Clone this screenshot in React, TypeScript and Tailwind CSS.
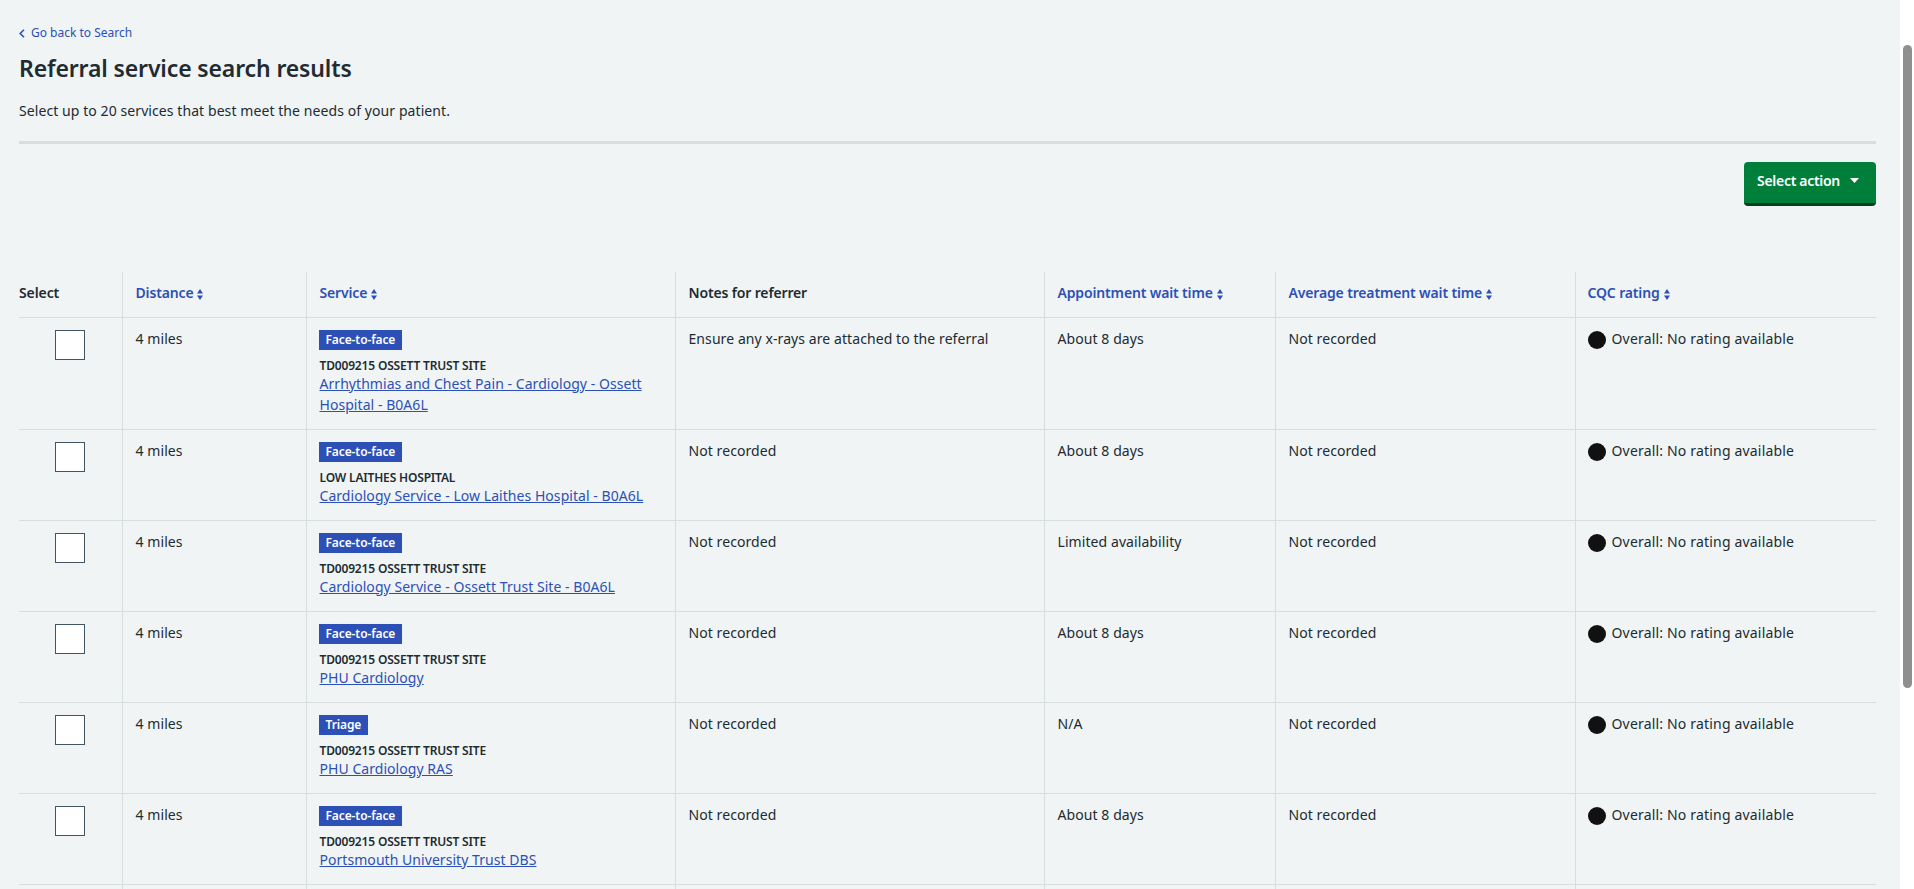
const rows = [
  {
    tag: 'Face-to-face',
    site: 'TD009215 OSSETT TRUST SITE',
    service: 'Arrhythmias and Chest Pain - Cardiology - Ossett Hospital - B0A6L',
    notes: 'Ensure any x-rays are attached to the referral',
    wait: 'About 8 days',
  },
  {
    tag: 'Face-to-face',
    site: 'LOW LAITHES HOSPITAL',
    service: 'Cardiology Service - Low Laithes Hospital - B0A6L',
    notes: 'Not recorded',
    wait: 'About 8 days',
  },
  {
    tag: 'Face-to-face',
    site: 'TD009215 OSSETT TRUST SITE',
    service: 'Cardiology Service - Ossett Trust Site - B0A6L',
    notes: 'Not recorded',
    wait: 'Limited availability',
  },
  {
    tag: 'Face-to-face',
    site: 'TD009215 OSSETT TRUST SITE',
    service: 'PHU Cardiology',
    notes: 'Not recorded',
    wait: 'About 8 days',
  },
  {
    tag: 'Triage',
    site: 'TD009215 OSSETT TRUST SITE',
    service: 'PHU Cardiology RAS',
    notes: 'Not recorded',
    wait: 'N/A',
  },
  {
    tag: 'Face-to-face',
    site: 'TD009215 OSSETT TRUST SITE',
    service: 'Portsmouth University Trust DBS',
    notes: 'Not recorded',
    wait: 'About 8 days',
  },
];

function SortIcon() {
  return (
    <svg className="inline-block ml-[4px] align-[-2px]" width="6" height="11" viewBox="0 0 6 11" fill="currentColor">
      <path d="M3 0 L6 4.5 H0 Z" />
      <path d="M3 11 L0 6.5 H6 Z" />
    </svg>
  );
}

function SortHeader({ label, last }: { label: string; last?: boolean }) {
  return (
    <th className={`pr-[11px] pb-[3px] h-[45px] text-left font-semibold tracking-[-0.15px] text-[#2c50b5] whitespace-nowrap border-b border-[#d8dde0] ${last ? 'pl-[12px]' : 'pl-[13px] border-r'}`}>
      {label}
      <SortIcon />
    </th>
  );
}

export default function App() {
  return (
    <div className="flex h-screen overflow-hidden bg-white font-['Noto_Sans',sans-serif] text-[14px] tracking-[0.08px] text-[#212b32]">
      <div className="w-[1900px] shrink-0 bg-[#f0f4f5] pl-[19px] pr-[24px] pt-[25px]">
        <a href="#" className="flex items-center text-[12px] leading-[16px] tracking-normal text-[#2c50b5]">
          <svg className="mr-[6px]" width="6" height="9" viewBox="0 0 6 9" fill="none" stroke="currentColor" strokeWidth="1.6">
            <path d="M5 0.7 L1.2 4.5 L5 8.3" />
          </svg>
          Go back to Search
        </a>
        <h1 className="mt-[11px] text-[23px] leading-[32px] font-semibold tracking-[-0.13px]">Referral service search results</h1>
        <p className="mt-[16px] text-[14px] leading-[21px]">Select up to 20 services that best meet the needs of your patient.</p>
        <hr className="mt-[20px] border-t-[3px] border-[#d8dde0]" />
        <div className="flex justify-end mt-[18px]">
          <button className="flex items-center h-[44px] pl-[13px] pr-[13px] pb-[5px] bg-[#007f3b] border-b-[3px] border-[#00401e] rounded-[4px] text-white font-semibold tracking-[-0.3px]">
            Select action
            <svg className="ml-[10px] mr-[4px] mt-[1px]" width="9" height="5" viewBox="0 0 9 5" fill="currentColor">
              <path d="M0 0 H9 L4.5 5 Z" />
            </svg>
          </button>
        </div>
        <table className="mt-[66px] w-[1857px] table-fixed border-collapse">
          <colgroup>
            <col className="w-[103px]" />
            <col className="w-[184px]" />
            <col className="w-[369px]" />
            <col className="w-[369px]" />
            <col className="w-[231px]" />
            <col className="w-[300px]" />
            <col className="w-[301px]" />
          </colgroup>
          <thead>
            <tr>
              <th className="pb-[3px] h-[45px] text-left font-semibold tracking-[-0.1px] border-b border-r border-[#d8dde0]">Select</th>
              <SortHeader label="Distance" />
              <SortHeader label="Service" />
              <th className="pl-[13px] pr-[11px] pb-[3px] h-[45px] text-left font-semibold tracking-[-0.15px] border-b border-r border-[#d8dde0]">Notes for referrer</th>
              <SortHeader label="Appointment wait time" />
              <SortHeader label="Average treatment wait time" />
              <SortHeader label="CQC rating" last />
            </tr>
          </thead>
          <tbody>
            {rows.map((row, i) => (
              <tr key={i} className="border-b border-[#d8dde0] align-top">
                <td className="pt-[12px] border-r border-[#d8dde0]">
                  <input type="checkbox" className="block mx-auto w-[30px] h-[30px] appearance-none bg-white border border-[#425563]" />
                </td>
                <td className="pl-[13px] pr-[11px] pt-[10px] leading-[21px] border-r border-[#d8dde0]">4 miles</td>
                <td className="pl-[13px] pr-[11px] pt-[12px] pb-[14px] border-r border-[#d8dde0]">
                  <div className="-ml-[1px] w-fit h-[20px] px-[7px] bg-[#2c50b5] text-white text-[12px] leading-[20px] font-semibold tracking-[-0.1px]">{row.tag}</div>
                  <div className="mt-[7px] text-[12px] leading-[18px] font-semibold tracking-[-0.17px]">{row.site}</div>
                  <a href="#" className="block -mt-[2px] leading-[21px] tracking-[0.05px] text-[#2c50b5] underline">{row.service}</a>
                </td>
                <td className="pl-[13px] pr-[11px] pt-[10px] leading-[21px] border-r border-[#d8dde0]">{row.notes}</td>
                <td className="pl-[13px] pr-[11px] pt-[10px] leading-[21px] border-r border-[#d8dde0]">{row.wait}</td>
                <td className="pl-[13px] pr-[11px] pt-[10px] leading-[21px] border-r border-[#d8dde0]">Not recorded</td>
                <td className="px-[12px] pt-[10px] leading-[21px] tracking-[0.18px]">
                  <div className="flex items-start">
                    <span className="w-[18px] h-[18px] rounded-full bg-[#111111] shrink-0 mr-[6px] mt-[3px]" />
                    Overall: No rating available
                  </div>
                </td>
              </tr>
            ))}
            <tr className="h-[40px]">
              <td className="border-r border-[#d8dde0]" />
              <td className="border-r border-[#d8dde0]" />
              <td className="border-r border-[#d8dde0]" />
              <td className="border-r border-[#d8dde0]" />
              <td className="border-r border-[#d8dde0]" />
              <td className="border-r border-[#d8dde0]" />
              <td />
            </tr>
          </tbody>
        </table>
      </div>
      {/* scrollbar */}
      <div className="flex-1 pl-[3px] pr-[2px] pt-[45px]">
        <div className="h-[643px] rounded-[5px] bg-[#8f8f8f]" />
      </div>
    </div>
  );
}
